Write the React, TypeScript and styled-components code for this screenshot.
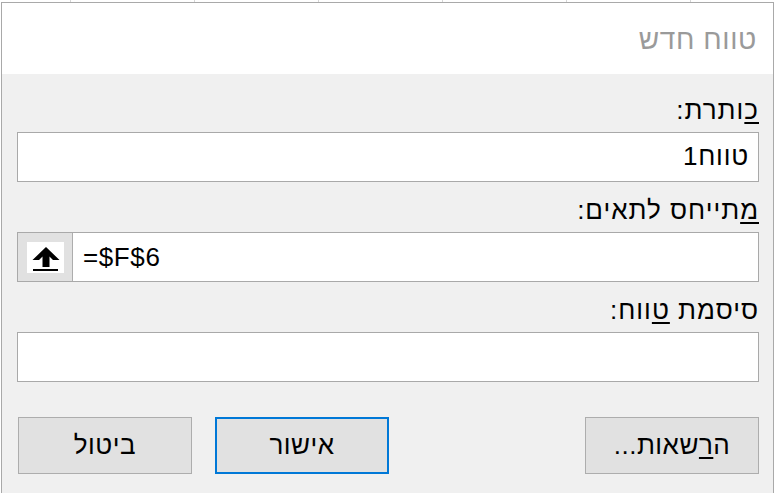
import * as React from "react";
import styled, { createGlobalStyle } from "styled-components";

const GlobalStyle = createGlobalStyle`
  html, body {
    margin: 0;
    padding: 0;
    height: 100%;
  }
  body {
    background-color: #ffffff;
    background-image: linear-gradient(90deg, #d6d6d6 1px, transparent 1px);
    background-size: 124px 100%;
    background-position: 70px 0;
    overflow: hidden;
    font-family: "Liberation Sans", "DejaVu Sans", sans-serif;
  }
`;

const ArrowIcon = () => (
  <svg width="37" height="31" viewBox="0 0 37 31">
    <polygon
      points="19,5 32.5,18 26,18 22.5,14.5 22.5,25 15.5,25 15.5,14.5 12,18 5.5,18"
      fill="#000"
    />
    <rect x="6" y="27" width="25" height="2" fill="#000" />
  </svg>
);

const App: React.FC = () => {
  return (
    <>
      <GlobalStyle />
      <Dialog dir="rtl">
        <TitleBar>טווח חדש</TitleBar>
        <Body>
          <Field>
            <Label>
              <u>כ</u>ותרת:
            </Label>
            <TextBox>טווח1</TextBox>
          </Field>
          <Field>
            <Label>
              <u>מ</u>תייחס לתאים:
            </Label>
            <RefBox dir="ltr">
              <RefButton>
                <IconTile>
                  <ArrowIcon />
                </IconTile>
              </RefButton>
              <RefText>=$F$6</RefText>
            </RefBox>
          </Field>
          <Field>
            <Label>
              סיסמת <u>ט</u>ווח:
            </Label>
            <TextBox />
          </Field>
          <ButtonRow>
            <Button>
              ה<u>ר</u>שאות...
            </Button>
            <ButtonGroup>
              <Button primary>אישור</Button>
              <Button>ביטול</Button>
            </ButtonGroup>
          </ButtonRow>
        </Body>
      </Dialog>
    </>
  );
};

export default App;

const Dialog = styled.div`
  margin: 2px 0 0 1px;
  width: 773px;
  height: 491px;
  box-sizing: border-box;
  border: 1px solid #a9a9a9;
  border-bottom: none;
  display: flex;
  flex-direction: column;
  background: #f0f0f0;
`;

const TitleBar = styled.div`
  height: 71px;
  box-sizing: border-box;
  background: #ffffff;
  color: #9a9a9a;
  font-size: 28px;
  line-height: 32px;
  letter-spacing: 0.6px;
  padding: 21px 16px 0 0;
`;

const Body = styled.div`
  flex: 1;
  padding: 20px 14px 0 15px;
  display: flex;
  flex-direction: column;
  color: #000;
`;

const Field = styled.div`
  display: flex;
  flex-direction: column;
  & + & {
    margin-top: 12px;
  }
`;

const Label = styled.div`
  font-size: 26px;
  line-height: 32px;
  letter-spacing: 1px;
  margin-bottom: 6px;
  u {
    text-underline-offset: 3px;
  }
`;

const TextBox = styled.div`
  height: 50px;
  box-sizing: border-box;
  border: 1px solid #a9a9a9;
  background: #ffffff;
  font-size: 26px;
  line-height: 46px;
  letter-spacing: 0.8px;
  padding: 0 9px;
`;

const RefBox = styled.div`
  height: 50px;
  box-sizing: border-box;
  border: 1px solid #a9a9a9;
  background: #ffffff;
  display: flex;
  align-items: stretch;
`;

const RefButton = styled.div`
  width: 54px;
  background: #e1e1e1;
  border-right: 1px solid #adadad;
  display: flex;
  align-items: center;
  justify-content: center;
`;

const IconTile = styled.div`
  width: 37px;
  height: 31px;
  background: #ffffff;
  display: flex;
`;

const RefText = styled.div`
  font-size: 26px;
  line-height: 48px;
  letter-spacing: 0.6px;
  padding-left: 10px;
`;

const ButtonRow = styled.div`
  margin-top: 35px;
  display: flex;
  justify-content: space-between;
  padding-left: 1px;
`;

const ButtonGroup = styled.div`
  display: flex;
  gap: 23px;
`;

const Button = styled.div<{ primary?: boolean }>`
  width: 174px;
  height: 57px;
  box-sizing: border-box;
  background: #e1e1e1;
  border: ${p => (p.primary ? "2px solid #0078d7" : "1px solid #adadad")};
  font-size: 26px;
  letter-spacing: 0.5px;
  display: flex;
  align-items: center;
  justify-content: center;
  u {
    text-underline-offset: 3px;
  }
`;
